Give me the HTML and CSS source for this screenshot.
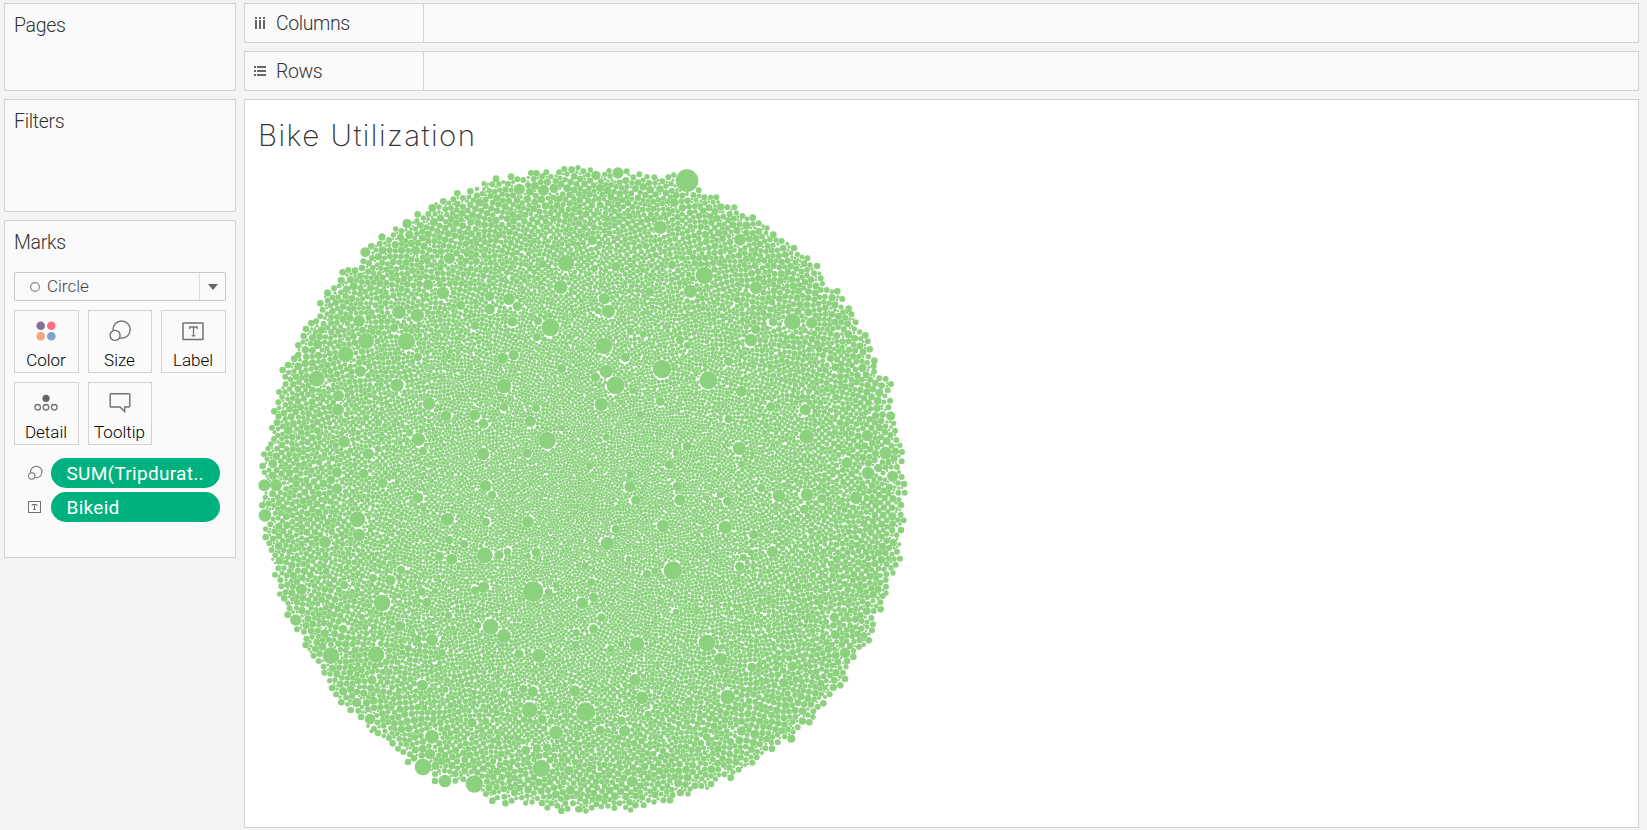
FILE: index.html
```html
<!DOCTYPE html>
<html lang="en">
<head>
<meta charset="utf-8">
<title>Bike Utilization</title>
<link rel="stylesheet" href="styles.css">
</head>
<body>
<div class="workspace">
  <aside class="sidebar">
    <section class="card pages"><h2 class="card-title">Pages</h2></section>
    <section class="card filters"><h2 class="card-title">Filters</h2></section>
    <section class="card marks">
      <h2 class="card-title">Marks</h2>
      <div class="mark-type">
        <svg class="mark-type-icon" width="12" height="12" viewBox="0 0 12 12"><circle cx="6" cy="6" r="4.4" fill="none" stroke="#8c8c8c" stroke-width="1.2"/></svg>
        <span class="mark-type-name">Circle</span>
        <span class="mark-type-arrow"><svg width="10" height="6" viewBox="0 0 10 6"><path d="M0 0h10L5 6z" fill="#666"/></svg></span>
      </div>
      <div class="mark-buttons">
        <div class="mark-button">
          <svg width="24" height="24" viewBox="0 0 24 24"><circle cx="6.7" cy="6.7" r="4.3" fill="#876f97"/><circle cx="17.3" cy="6.7" r="4.3" fill="#fa6e80"/><circle cx="6.7" cy="17.3" r="4.3" fill="#f4a67c"/><circle cx="17.3" cy="17.3" r="4.3" fill="#7ea3cd"/></svg>
          <span>Color</span>
        </div>
        <div class="mark-button">
          <svg width="24" height="24" viewBox="0 0 24 24" fill="#fafafa" stroke="#717171" stroke-width="1.4"><circle cx="13.6" cy="10.6" r="8.6"/><circle cx="7.1" cy="16.4" r="5"/></svg>
          <span>Size</span>
        </div>
        <div class="mark-button">
          <svg width="24" height="24" viewBox="0 0 24 24"><rect x="2" y="4" width="20" height="16.5" rx=".6" fill="none" stroke="#717171" stroke-width="1.5"/><path d="M8.8 10V8h7.4v2M12.5 8v9M10.6 16.9h3.8" fill="none" stroke="#717171" stroke-width="1.3"/></svg>
          <span>Label</span>
        </div>
        <div class="mark-button">
          <svg width="24" height="24" viewBox="0 0 24 24"><circle cx="12" cy="7.3" r="3.6" fill="#666"/><g fill="none" stroke="#717171" stroke-width="1.3"><circle cx="3.7" cy="16.3" r="2.8"/><circle cx="12" cy="16.3" r="2.8"/><circle cx="20.3" cy="16.3" r="2.8"/></g></svg>
          <span>Detail</span>
        </div>
        <div class="mark-button">
          <svg width="24" height="24" viewBox="0 0 24 24"><path d="M3 2.8h18a.8.8 0 0 1 .8.8v11.600a.8.8 0 0 1-.8.8h-4.300v4.600L12 16H3a.8.8 0 0 1-.8-.8V3.600a.8.8 0 0 1 .8-.8z" fill="none" stroke="#717171" stroke-width="1.4"/></svg>
          <span>Tooltip</span>
        </div>
      </div>
      <div class="encodings">
        <div class="encoding">
          <svg width="16" height="16" viewBox="0 0 16 16" fill="#fafafa" stroke="#777" stroke-width="1.100"><circle cx="9.300" cy="7" r="5.700"/><circle cx="4.700" cy="11" r="3.200"/></svg>
          <span class="pill">SUM(Tripdurat..</span>
        </div>
        <div class="encoding">
          <svg width="16" height="16" viewBox="0 0 16 16" fill="none" stroke="#717171" stroke-width="1"><rect x="1.500" y="2.500" width="12" height="11"/><path d="M5.200 6.800V5.500h4.600v1.300M7.500 5.500v5M6.200 10.500h2.600"/></svg>
          <span class="pill">Bikeid</span>
        </div>
      </div>
    </section>
  </aside>
  <main class="main">
    <div class="shelf">
      <div class="shelf-label">
        <svg width="12" height="12" viewBox="0 0 12 12" fill="#666"><path d="M1 0h2v2H1zM5 0h2v2H5zM9 0h2v2H9zM1 3h2v9H1zM5 3h2v9H5zM9 3h2v9H9z"/></svg>
        <span>Columns</span>
      </div>
    </div>
    <div class="shelf">
      <div class="shelf-label">
        <svg width="12" height="12" viewBox="0 0 12 12" fill="#666"><path d="M0 1h2v2H0zM0 5h2v2H0zM0 9h2v2H0zM3 1h9v2H3zM3 5h9v2H3zM3 9h9v2H3z"/></svg>
        <span>Rows</span>
      </div>
    </div>
    <section class="view">
      <h1 class="view-title">Bike Utilization</h1>
      <canvas class="bubbles" id="bubbles" width="660" height="660"></canvas>
    </section>
  </main>
</div>
<script src="bubbles.js"></script>
</body>
</html>
```

FILE: styles.css
```css
* { box-sizing: border-box; }

body {
  margin: 0;
  background: #f4f4f4;
  color: #333;
  font-family: Roboto, "Liberation Sans", sans-serif;
  overflow: hidden;
}

.workspace {
  display: flex;
  gap: 8px;
  height: 830px;
  padding: 3px 8px 2px 4px;
}

.sidebar {
  display: flex;
  flex-direction: column;
  gap: 8px;
  width: 232px;
}

.card {
  border: 1px solid #d2d2d2;
  background: #fafafa;
  padding: 10px 9px;
}
.pages { height: 88px; }
.filters { height: 113px; }
.marks { height: 338px; }

.card-title {
  margin: 0;
  font-size: 19.500px;
  font-weight: 300;
  letter-spacing: -0.3px;
  line-height: 24px;
}

.mark-type {
  display: flex;
  align-items: center;
  height: 29px;
  margin-top: 17px;
  padding-left: 14px;
  border: 1px solid #c8c8c8;
  border-radius: 2px;
  color: #444;
  font-size: 17px;
  font-weight: 300;
}
.mark-type-name {
  margin-left: 6px;
  padding-bottom: 2px;
}
.mark-type-arrow {
  display: flex;
  align-items: center;
  justify-content: center;
  width: 26px;
  height: 100%;
  margin-left: auto;
  border-left: 1px solid #ddd;
}

.mark-buttons {
  display: grid;
  grid-template-columns: 65px 64px 65px;
  gap: 9px;
  margin-top: 9px;
}
.mark-button {
  display: flex;
  flex-direction: column;
  align-items: center;
  height: 63px;
  padding: 8px 1px 0 0;
  border: 1px solid #d2d2d2;
  color: #000;
  font-size: 17px;
  font-weight: 300;
  line-height: 20px;
}
.mark-button span { margin-top: 7px; }

.encodings {
  display: flex;
  flex-direction: column;
  gap: 4px;
  margin: 13px 6px 0 13px;
}
.encoding {
  display: flex;
  align-items: center;
  gap: 8px;
}
.pill {
  flex: 1;
  height: 30px;
  padding-left: 15.500px;
  border-radius: 15px;
  background: #00b180;
  color: #fff;
  font-size: 19px;
  letter-spacing: 0.3px;
  line-height: 32px;
}

.main {
  display: flex;
  flex: 1;
  flex-direction: column;
  gap: 8px;
}

.shelf {
  height: 40px;
  border: 1px solid #d2d2d2;
  background: #fafafa;
}
.shelf-label {
  display: flex;
  align-items: center;
  gap: 10px;
  width: 179px;
  height: 38px;
  padding-left: 9px;
  border-right: 1px solid #d2d2d2;
  font-size: 19.500px;
  font-weight: 300;
  letter-spacing: -0.4px;
}

.view {
  flex: 1;
  border: 1px solid #d2d2d2;
  background: #fff;
}
.view-title {
  margin: 14px 0 0 13px;
  font-family: Inter, "Open Sans", sans-serif;
  font-size: 29.500px;
  font-weight: 200;
  letter-spacing: 1.450px;
  line-height: 42px;
}
.bubbles {
  display: block;
  margin: 4px 0 0 5px;
}
```

FILE: bubbles.js
```js
// Packed bubble chart. Values are "x,y,r" in thirds of a pixel, per quadrant.
const QUADRANTS = [
  { x: 0, y: -10,
    big: "808,118,17 880,121,17 912,115,14 547,174,12 471,221,14 346,307,15 497,301,14 598,325,17 948,339,25 679,334,11 932,411,21 534,404,16 579,429,19 777,447,18 719,439,15 719,477,16 632,466,14 802,469,14 447,486,21 502,496,20 327,513,18 348,573,24 469,574,26 901,532,27 432,533,13 787,515,15 864,513,12 861,561,13 675,527,13 287,613,24 203,583,14 331,664,17 200,686,24 758,625,17 791,615,16 503,621,13 935,655,14 762,708,22 441,706,20 265,737,17 264,779,18 537,761,19 588,797,16 674,795,17 700,821,15 841,814,17 762,771,13 858,774,13 479,848,11 892,871,26 505,868,20 519,903,13 282,875,18 355,912,17 384,897,10 699,912,19 832,910,14 261,967,16 341,971,15 936,834,10 385,818,11 348,803,10",
    edge: "38,948,10 42,913,9 43,967,8 54,896,8 72,867,9 66,833,9 73,847,6 81,818,10 73,784,10 85,757,9 87,726,9 107,702,9 106,680,9 98,660,10 114,645,10 133,626,10 145,586,10 145,615,10 161,558,10 168,537,10 184,520,10 199,514,9 211,499,9 211,460,10 218,479,9 233,429,11 252,415,9 274,391,11 278,367,10 295,360,9 315,362,10 336,354,10 340,334,9 364,289,10 366,324,9 389,281,9 396,261,11 417,270,9 430,255,8 437,237,8 454,243,9 503,193,10 490,217,5 520,204,8 535,192,9 580,154,10 558,161,5 586,178,9 610,148,9 622,130,10 639,144,9 661,124,10 681,117,7 702,101,8 697,131,8 727,103,9 738,86,10 760,96,6 774,101,9 783,80,10 802,88,9 820,90,9 835,82,5 843,69,9 859,70,10 877,79,9 889,67,9 903,80,8 927,67,9 943,57,9 965,59,10 984,53,8" },
  { x: 330, y: -10,
    big: "321,92,34 114,69,17 48,76,14 241,232,20 283,158,13 480,269,18 373,376,26 331,424,20 37,271,14 107,350,14 276,345,13 43,355,11 209,426,14 528,413,19 73,446,17 85,484,20 55,483,10 637,515,25 695,519,17 579,516,13 527,538,14 513,570,19 72,588,25 151,544,11 190,553,11 300,570,13 323,586,11 136,622,14 246,657,28 79,664,20 107,706,27 385,691,27 46,682,14 446,634,14 484,724,17 64,763,20 241,754,14 158,722,10 181,793,11 572,771,14 676,779,17 446,807,13 680,860,22 322,889,14 478,895,20 79,862,11 268,944,14 484,943,11 288,909,10 917,909,19 862,857,17 932,798,14 801,938,17 864,969,19 895,954,13 938,979,17 29,949,11 766,652,12 751,625,11 847,654,13 805,553,12 685,487,12",
    edge: "10,64,9 31,60,8 74,73,8 87,62,8 140,64,9 160,82,9 178,73,9 201,80,8 223,82,9 247,94,9 265,82,9 281,75,8 273,101,8 356,121,9 340,135,9 373,142,9 392,142,8 409,142,9 422,171,11 442,172,9 463,172,9 469,189,8 487,198,9 518,203,10 536,220,9 561,234,8 580,254,10 605,273,9 622,281,6 642,294,10 652,313,8 682,325,9 672,341,10 711,348,10 702,370,9 718,370,6 722,385,9 727,401,8 740,420,9 756,425,7 772,424,10 787,447,9 765,464,10 806,476,10 814,493,9 827,517,9 823,537,8 839,546,8 856,556,10 863,574,9 869,598,10 865,620,8 883,632,10 881,649,9 882,665,9 898,685,9 917,687,9 933,702,9 923,721,9 930,752,9 925,772,9 941,820,8 945,842,9 949,870,9 960,886,8 966,906,9 965,934,9 951,951,9 965,981,9" },
  { x: 0, y: 320,
    big: "261,26,16 398,10,15 504,53,16 707,18,18 726,45,13 78,15,18 322,118,24 327,165,19 225,186,18 592,118,20 834,126,18 707,126,13 598,180,13 643,192,13 704,226,24 605,238,17 568,229,14 747,225,14 772,215,11 859,217,14 834,228,9 154,328,17 421,301,16 453,270,13 369,294,13 283,315,13 701,322,17 676,332,13 849,335,31 896,337,12 515,335,13 555,333,10 918,314,10 396,369,25 530,367,14 137,420,17 450,438,16 596,406,11 722,440,24 762,468,21 683,436,11 546,480,18 243,527,25 378,524,25 475,505,11 577,518,11 867,527,21 807,522,14 517,616,17 366,600,14 848,635,16 763,643,12 820,627,13 974,633,17 839,690,24 877,718,14 666,728,14 707,724,11 918,758,21 360,717,16 546,770,21 540,822,16 827,811,14 861,806,13 891,803,13 874,865,26 956,872,14 961,930,14 979,458,11 977,494,12 320,668,14 279,447,13 224,460,13 336,412,10",
    edge: "43,16,18 45,106,19 519,861,25 585,903,19 673,912,26 46,52,8 37,76,10 61,133,9 47,147,8 47,171,10 58,190,9 65,210,9 76,226,9 68,238,5 85,265,9 75,284,9 91,300,9 94,319,9 89,342,8 103,355,10 119,385,9 113,404,10 141,448,9 162,455,9 167,495,10 169,476,9 191,527,9 206,543,9 221,560,9 223,578,9 239,602,8 246,624,10 258,643,9 274,667,10 302,690,10 292,673,7 333,711,10 325,692,9 372,746,9 364,754,6 384,759,10 401,768,7 417,774,9 428,790,10 444,806,9 460,816,9 480,823,9 474,846,10 492,835,10 555,882,9 555,903,10 616,902,9 640,898,9 616,881,10 708,942,9 727,962,10 742,953,8 766,970,10 763,950,9 785,962,9 799,955,6 815,953,8 827,969,8 846,966,8 862,955,8 876,969,10 892,983,9 904,970,9 922,977,9 934,992,10 953,986,9 969,970,9 985,988,10" },
  { x: 330, y: 320,
    big: "150,20,17 292,19,14 167,60,14 300,60,17 421,44,11 443,64,14 543,24,13 597,47,19 681,44,19 726,56,14 673,88,14 828,53,19 249,138,19 436,142,20 108,147,13 82,190,20 521,164,14 692,153,10 577,215,17 479,259,14 490,232,11 513,218,10 770,238,12 201,282,13 279,272,28 146,237,9 34,307,12 41,352,14 7,370,18 64,413,13 41,447,14 171,492,22 381,489,25 422,538,20 92,506,11 123,492,10 288,396,10 516,562,14 637,559,15 611,608,14 763,412,14 766,464,14 795,518,16 165,600,18 186,653,19 443,651,22 327,664,13 17,696,29 61,751,14 124,722,13 205,703,11 134,753,17 484,753,14 525,763,14 478,781,12 157,905,17 394,868,12 860,393,12 16,257,11 768,578,11",
    edge: "972,12,10 974,38,9 955,38,9 963,75,10 962,104,9 971,121,9 963,150,10 950,165,8 958,193,6 951,215,9 960,236,9 947,254,9 939,279,8 919,283,9 917,300,9 918,320,9 918,339,8 908,348,9 901,367,9 902,388,10 881,393,9 874,414,9 879,433,9 876,451,9 866,481,10 851,494,7 837,501,9 820,530,10 801,543,10 798,560,8 789,578,9 795,597,10 781,616,10 760,622,11 749,643,9 730,670,10 713,680,9 700,694,9 699,711,8 688,727,10 667,723,11 653,742,9 634,776,12 614,770,8 593,787,9 576,806,10 556,805,9 546,819,6 530,832,9 517,848,9 495,855,6 476,869,9 452,893,10 433,883,9 406,897,8 393,912,10 381,924,6 364,918,9 345,917,10 324,942,8 301,938,11 278,945,9 270,961,10 250,961,9 222,966,8 205,961,8 191,976,9 166,976,10 152,990,8 137,982,8 118,970,9 103,984,9 84,978,8 64,980,8 35,983,9 18,993,8 1,989,8" }
];

const CX = 333, CY = 329, CELL = 12, COLS = 60;
const GAP = -0.08;
let seed = 20177;
function random() {
  seed = (seed * 1664525 + 1013904223) >>> 0;
  return seed / 4294967296;
}

const circles = [];
const grid = [];
const buckets = [];

function addCircle(c) {
  circles.push(c);
  const k = Math.floor(c.y / CELL) * COLS + Math.floor(c.x / CELL);
  (grid[k] = grid[k] || []).push(c);
}
function near(x, y, reach) {
  const found = [];
  const x0 = Math.floor((x - reach) / CELL), x1 = Math.floor((x + reach) / CELL);
  const y0 = Math.floor((y - reach) / CELL), y1 = Math.floor((y + reach) / CELL);
  for (let j = y0; j <= y1; j++)
    for (let i = x0; i <= x1; i++) {
      const cell = grid[j * COLS + i];
      if (cell) for (const c of cell) found.push(c);
    }
  return found;
}

const outline = [];
for (const q of QUADRANTS) {
  for (const kind of ["big", "edge"]) {
    for (const item of q[kind].split(" ")) {
      const [x, y, r] = item.split(",").map(Number);
      const c = { x: q.x + x / 3, y: q.y + y / 3, r: r / 3 };
      addCircle(c);
      if (kind === "edge")
        outline.push({ a: Math.atan2(c.y - CY, c.x - CX), d: Math.hypot(c.x - CX, c.y - CY) });
    }
  }
}
outline.sort((p, q) => p.a - q.a);

function outlineAt(x, y) {
  const a = Math.atan2(y - CY, x - CX);
  const i = outline.findIndex(p => p.a > a);
  if (i <= 0) return outline[0].d;
  const p = outline[i - 1], q = outline[i];
  return p.d + (q.d - p.d) * (a - p.a) / (q.a - p.a || 1);
}

function radiusAt(d) {
  const t = d / 320;
  const base = 1.55 + 0.6 * t + 1.35 * Math.pow(t, 3.5);
  const roll = random();
  if (roll < 0.05) return base + 0.7 + random() * 1.2;
  return base * (0.76 + random() * 0.5);
}

function pushTangents(c) {
  const r = radiusAt(Math.hypot(c.x - CX, c.y - CY));
  for (const n of near(c.x, c.y, c.r + 18)) {
    if (n === c) continue;
    const dx = n.x - c.x, dy = n.y - c.y, d = Math.hypot(dx, dy);
    const a = c.r + r + GAP, b = n.r + r + GAP;
    if (d > a + b || d < 0.1) continue;
    const m = (a * a - b * b + d * d) / (2 * d);
    const hh = a * a - m * m;
    if (hh < 0) continue;
    const h = Math.sqrt(hh);
    for (const s of [-1, 1]) {
      const x = c.x + (m * dx + s * h * dy) / d;
      const y = c.y + (m * dy - s * h * dx) / d;
      const dist = Math.hypot(x - CX, y - CY);
      if (dist > 330) continue;
      const k = Math.floor(dist * 3);
      (buckets[k] = buckets[k] || []).push({ x, y, r });
    }
  }
}
function clearance(x, y, least) {
  let room = 5;
  for (const reach of [3, 14]) {
    for (const n of near(x, y, reach)) {
      const gap = Math.hypot(n.x - x, n.y - y) - n.r;
      if (gap < least) return 0;
      if (gap < room) room = gap;
    }
  }
  return room;
}

for (const c of [{ x: CX, y: CY, r: 1.5 }, { x: CX + 3.2, y: CY, r: 1.5 }]) {
  addCircle(c);
  pushTangents(c);
}
let k = 0;
while (k < 1000) {
  const bucket = buckets[k];
  if (!bucket || !bucket.length) { k++; continue; }
  const c = bucket.pop();
  if (!clearance(c.x, c.y, c.r - 0.22)) continue;
  if (Math.hypot(c.x - CX, c.y - CY) > outlineAt(c.x, c.y)) continue;
  addCircle(c);
  pushTangents(c);
  k = Math.max(0, k - 30);
}

// Fill the holes that the front left behind, largest first.
for (const least of [2.4, 1.7, 1.1]) {
  for (let y = 5; y < 655; y++)
    for (let x = 5; x < 660; x++) {
      const d = Math.hypot(x - CX, y - CY);
      if (d > 322) continue;
      const room = clearance(x, y, least);
      if (!room || d > outlineAt(x, y)) continue;
      addCircle({ x, y, r: Math.min(room, 1.8 + 1.5 * Math.pow(d / 320, 4)) });
    }
}

const ctx = document.getElementById("bubbles").getContext("2d");
ctx.fillStyle = "#8cd17d";
for (const c of circles) {
  ctx.beginPath();
  ctx.arc(c.x, c.y, c.r, 0, Math.PI * 2);
  ctx.fill();
}
```
